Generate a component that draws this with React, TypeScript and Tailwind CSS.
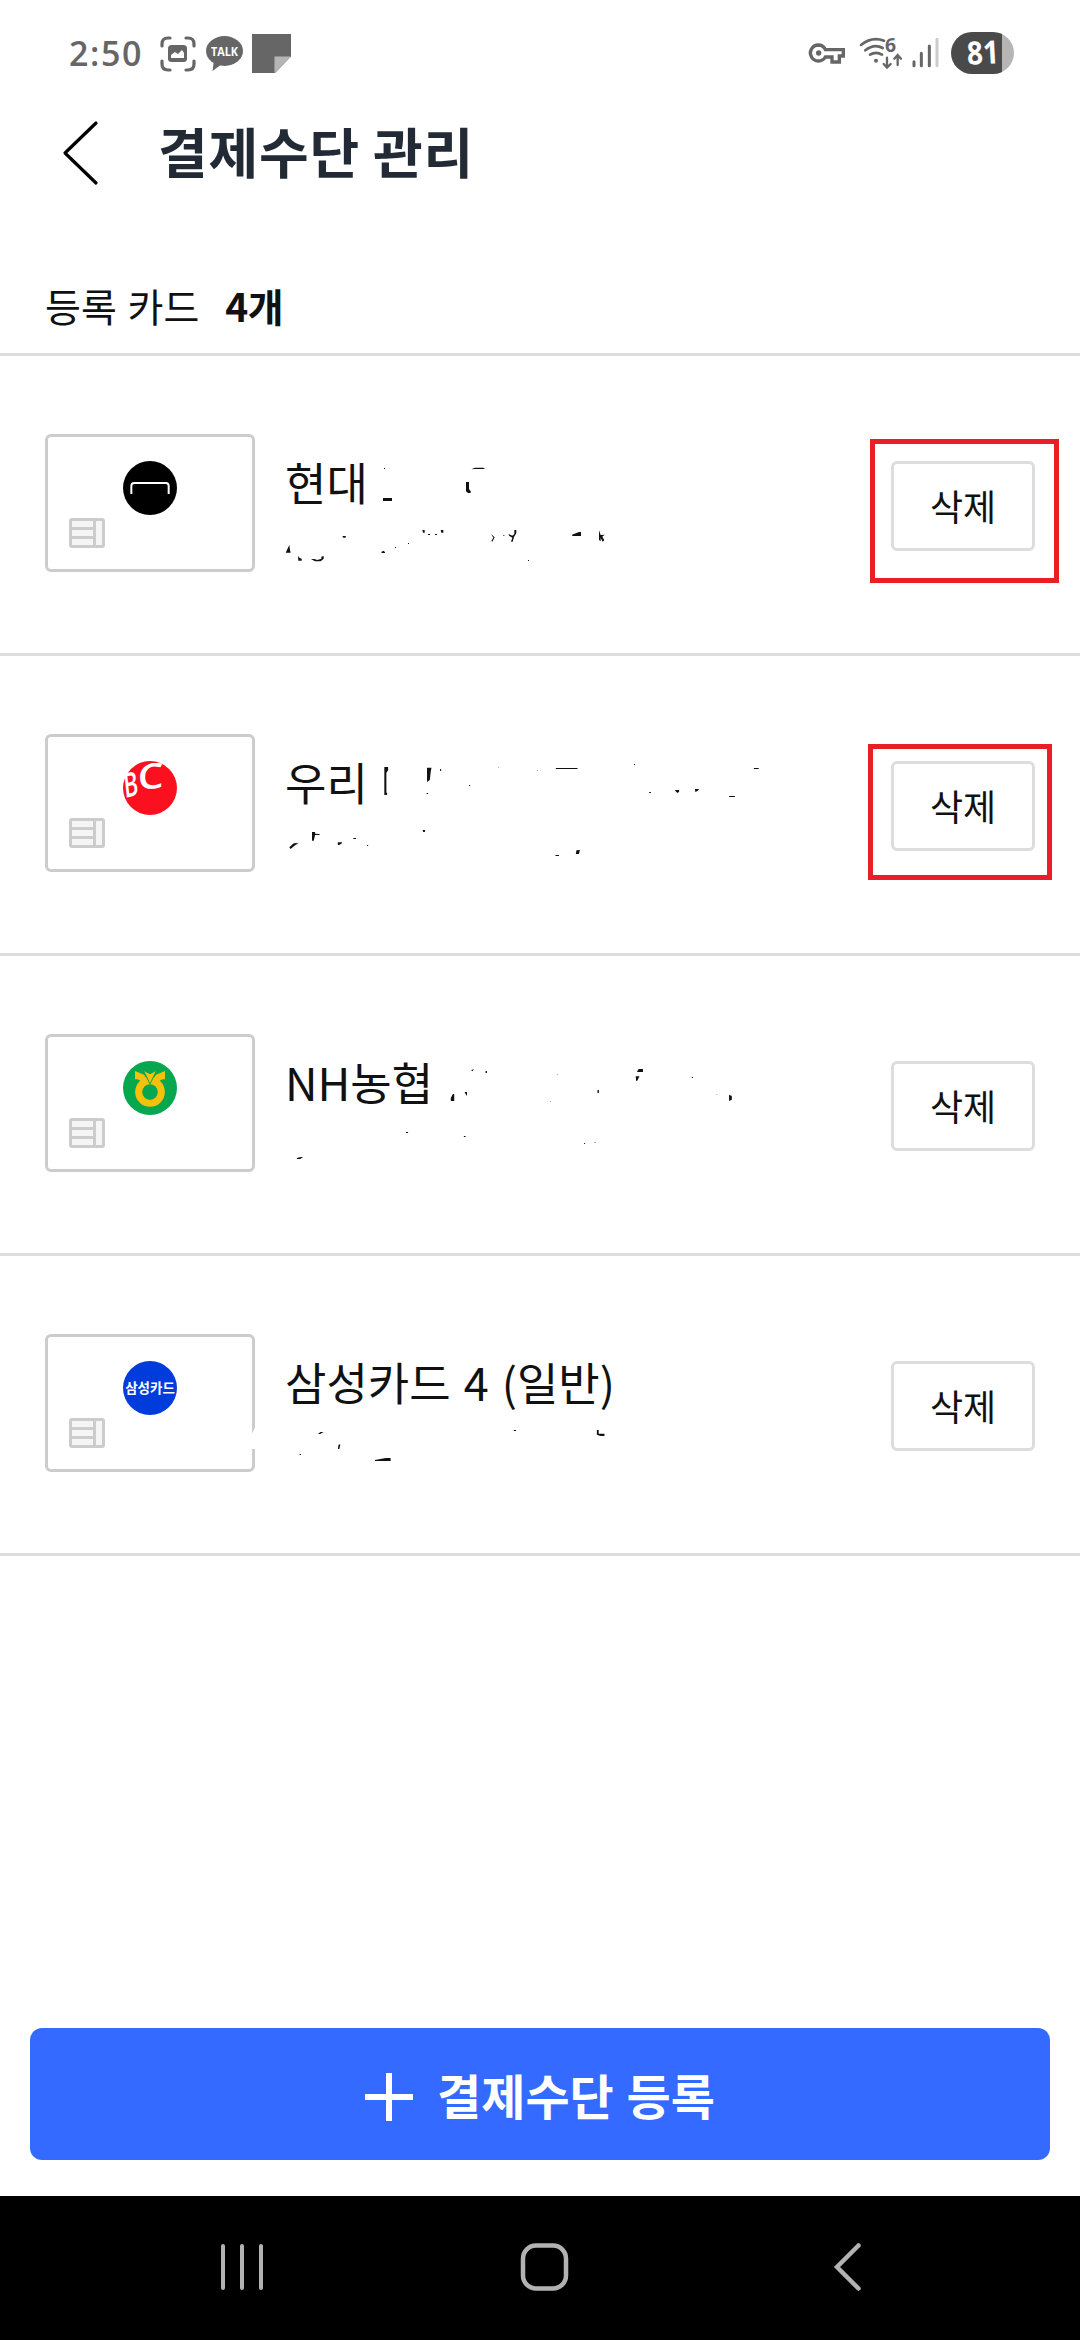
import React from 'react';

const INK = '#111111';

interface CardItem {
  id: string;
  name: string;
  logo: React.ReactNode;
  marks: React.ReactNode;
  highlight?: string;
}

const HyundaiLogo = () => (
  <svg viewBox="369 603 162 162" className="w-[54px] h-[54px]">
    <circle cx="450" cy="684" r="81" fill="#000" />
    <path d="M394 702V678Q394 669 403 669H498Q506 669 506 678V702" fill="none" stroke="#fff" strokeWidth="6" />
  </svg>
);

const BcLogo = () => (
  <svg viewBox="369 123 162 162" className="w-[54px] h-[54px] overflow-visible">
    <circle cx="450" cy="204" r="81" fill="#fb1020" />
    <g fill="#fff" className="font-['Open_Sans',sans-serif] font-semibold">
      <text transform="translate(375 234) rotate(-14) skewX(-8) scale(0.66 1)" fontSize="100">B</text>
      <text transform="translate(413 210) rotate(-6) skewX(-6) scale(1.18 1)" fontSize="104">C</text>
    </g>
  </svg>
);

const NonghyupLogo = () => (
  <svg viewBox="369 123 162 162" className="w-[54px] h-[54px]">
    <circle cx="450" cy="204" r="81" fill="#07a750" />
    <circle cx="450" cy="216" r="33.5" fill="none" stroke="#f6c00b" strokeWidth="22" />
    <path d="M405 153L432 164L450 190L468 164L495 153V178Q484 176 479 182L490 196H410L421 182Q416 176 405 178Z" fill="#f6c00b" />
    <circle cx="450" cy="216" r="23" fill="#07a750" />
    <path d="M430 151L450 161L470 151L450 192Z" fill="#f6c00b" stroke="#07a750" strokeWidth="3" />
  </svg>
);

const SamsungLogo = () => (
  <div className="w-[54px] h-[54px] rounded-full bg-[#003bdc] flex items-center justify-center text-white text-[13.5px] leading-none font-bold whitespace-nowrap">
    삼성카드
  </div>
);

const Chip = () => (
  <svg viewBox="0 0 36 30" className="absolute left-[21px] top-[81px] w-9 h-[30px]">
    <rect x="1.5" y="1.5" width="33" height="27" rx="1.5" fill="#f5f5f5" stroke="#ccc" strokeWidth="3" />
    <path d="M25.5 1V29M2 10.5H25M2 19.5H25" stroke="#ccc" strokeWidth="3" />
  </svg>
);

// Leftover specks of the erased card details
const HyundaiMarks = () => (
  <svg viewBox="0 0 1200 450" preserveAspectRatio="none" className="absolute left-[260px] top-[74px] w-[400px] h-[150px]" fill={INK}>
    <path d="M369 204H396V213H369ZM372 114H375V117H372ZM618 156H627L627 177L632 184V189H624L618 184ZM634 118L645 113H670L675 117H645Z" />
    <path d="M77 368L88 345L90 360L92 368ZM114 378L119 384L125 386V392H115ZM153 387H163L172 390L184 386V380L191 378V386L182 394H165ZM247 318H258L256 323H250ZM364 366L370 362L375 366V369H365ZM405 351H408V354H405ZM444 339H447V342H444Z" />
    <path d="M487 300H494V308H489ZM504 312H510V315H504ZM525 312H531V315H525ZM542 300H550V308H544ZM693 312L704 322L697 335L694 333L700 323ZM730 315H733V318H730ZM746 312L757 317L763 312V300H769V310L762 321L758 335H753L757 323L747 317ZM804 390H807V393H804ZM936 314L957 306H963V318H937ZM1017 301L1022 315L1034 314L1027 320L1033 331L1028 335L1022 324V334L1017 330Z" />
  </svg>
);

const WooriMarks = () => (
  <svg viewBox="0 0 1568 390" preserveAspectRatio="none" className="absolute left-[260px] top-[84px] w-[540px] h-[130px]" fill={INK}>
    <path d="M361 81H372V91L367 98V158H369V165H361ZM485 83H498L496 94L493 120L485 126ZM484 159H488V162H484ZM523 87H526V93H523ZM607 135H610V138H607ZM859 84H922V87H859ZM1086 72H1089V75H1086ZM1130 156H1135V159H1130ZM1205 150H1217V155L1212 159L1208 155ZM1263 147H1275L1270 153L1264 156ZM1362 168H1379V171H1362ZM1434 84H1448V87H1434Z" />
    <path d="M692 81H694V84H692ZM804 90H807V93H804Z" fill="#999" />
    <path d="M85 322L98 310L112 309L99 318L89 327ZM151 276H160V281L173 282V285H160L156 302H151ZM226 307H238V310L230 315H226ZM271 294H279V297H271ZM311 315H314V318H311ZM472 270H479V276H474ZM858 345H868V348H858ZM919 331L929 330L926 342H917Z" />
  </svg>
);

const NonghyupMarks = () => (
  <svg viewBox="0 0 1568 390" preserveAspectRatio="none" className="absolute left-[260px] top-[84px] w-[540px] h-[130px]" fill={INK}>
    <path d="M554 183V174L560 162H564V183ZM594 156H601V168L597 162ZM613 91L621 87L617 94ZM655 93H659V99H655ZM980 150H984V159H980ZM1095 94L1100 87H1112V96H1096ZM1091 109H1102L1095 123L1092 122ZM1254 111H1257V114H1254ZM1362 164L1370 168V179L1362 183Z" />
    <path d="M424 276H430V279H424ZM592 288H597V291H592ZM941 309H944V312H941ZM107 354L119 351H125L117 357H107Z" />
    <path d="M862 102H865V105H862ZM842 183H845V186H842ZM970 306H976V309H970ZM1325 162H1328V165H1325Z" fill="#aaa" />
  </svg>
);

const SamsungMarks = () => (
  <svg viewBox="0 0 1568 720" preserveAspectRatio="none" className="absolute left-0 top-[64px] w-[700px] h-[240px] overflow-hidden" fill={INK}>
    <path d="M560 340L566 338L570 325H576V387H560Z" fill="#fff" />
    <path d="M712 342L718 336H725L717 342ZM757 387L758 376L762 372V376L760 387ZM671 402H674V405H671ZM840 420L864 414H875V423H840ZM1151 330H1156V333H1151ZM1337 330H1341V341H1354V348H1345L1337 344Z" />
  </svg>
);

const CARDS: CardItem[] = [
  { id: 'hyundai', name: '현대', logo: <HyundaiLogo />, marks: <HyundaiMarks />, highlight: '-left-[21px] -top-[22px] w-[189px] h-[144px]' },
  { id: 'woori', name: '우리', logo: <BcLogo />, marks: <WooriMarks />, highlight: '-left-[23px] -top-[17px] w-[184px] h-[136px]' },
  { id: 'nh', name: 'NH농협', logo: <NonghyupLogo />, marks: <NonghyupMarks /> },
  { id: 'samsung', name: '삼성카드 4 (일반)', logo: <SamsungLogo />, marks: <SamsungMarks /> },
];

const StatusBar = () => (
  <div className="h-[106px] shrink-0 flex items-start justify-between pl-[69px] pr-[60px] pt-[20px] text-[#666]">
    <div className="flex items-start">
      <span className="w-[91px] pt-[13px] text-[34px] leading-[40px] tracking-[1.6px] font-['Open_Sans',sans-serif] font-semibold">2:50</span>
      <svg viewBox="160 20 132 70" className="w-[132px] h-[70px]">
        <path d="M162 46V44Q162 38 168 38H170M186 38H188Q194 38 194 44V46M194 61V64Q194 70 188 70H186M170 70H168Q162 70 162 64V61" fill="none" stroke="#666" strokeWidth="3.2" strokeLinecap="round" />
        <rect x="168" y="45" width="19" height="17" rx="3.5" fill="#666" />
        <path d="M171 58V55L175 52L178 54L182 50L184 53V58Z" fill="#fff" />
        <ellipse cx="224.500" cy="51" rx="18.500" ry="15" fill="#666" />
        <path d="M214 60L212.500 71L222 64Z" fill="#666" />
        <text x="224.500" y="56" textAnchor="middle" textLength="27" lengthAdjust="spacingAndGlyphs" fontSize="13" fill="#fff" className="font-['Open_Sans',sans-serif] font-bold">TALK</text>
        <path d="M252 34H291V56.500L275 73H252Z" fill="#666" />
        <path d="M274.500 56.500H291L274.500 73Z" fill="#b5b5b5" />
      </svg>
    </div>
    <svg viewBox="0 0 900 210" className="w-[300px] h-[70px] -mr-[60px]">
      <path d="M115 75A24 24 0 1 0 136 111H156V126H178V108H190V89H136Q130 75 115 75Z" fill="none" stroke="#666" strokeWidth="10" />
      <circle cx="116" cy="99" r="8" fill="#666" />
      <g fill="none" stroke="#666" strokeWidth="8" strokeLinecap="round">
        <path d="M243 75Q275 48 312 62M256 91Q282 70 308 84M270 104Q288 93 306 104" />
        <path d="M321 113V142M311 132L321 143L332 132M353 135V106M343 116L353 105L363 116" strokeWidth="7" />
        <path d="M402 125V137M424 100V137M448 78V137" strokeWidth="9" />
        <path d="M471 58V137" stroke="#ccc" strokeWidth="9" />
      </g>
      <circle cx="288" cy="122" r="6" fill="#666" />
      <text x="315" y="95" fontSize="58" fill="#666" className="font-['Open_Sans',sans-serif] font-bold">6</text>
      <clipPath id="battery">
        <rect x="513" y="36" width="189" height="126" rx="63" />
      </clipPath>
      <g clipPath="url(#battery)">
        <rect x="513" y="36" width="153" height="126" fill="#4a4a4a" />
        <rect x="666" y="36" width="36" height="126" fill="#b5b5b5" />
      </g>
      <text x="609" y="132" textAnchor="middle" fontSize="96" textLength="96" lengthAdjust="spacingAndGlyphs" fill="#fff" transform="rotate(-3 609 100)" className="font-['Open_Sans',sans-serif] font-bold">81</text>
    </svg>
  </div>
);

const CardRow: React.FC<{ card: CardItem }> = ({ card }) => (
  <li className="relative h-[300px] flex items-start border-b-3 border-[#ddd] px-[45px] pt-[78px]">
    <div className="relative w-[210px] h-[138px] shrink-0 border-3 border-[#ccc] rounded-[6px] flex justify-center pt-6">
      {card.logo}
      <Chip />
    </div>
    <p className="flex-1 pl-[30px] pt-[18px] text-[45px] leading-[60px] [word-spacing:3px] whitespace-nowrap">{card.name}</p>
    <div className="relative mt-[27px]">
      <button className="w-[144px] h-[90px] pb-[2px] border-3 border-[#ddd] rounded-[6px] text-[36px] leading-none">삭제</button>
      {card.highlight && <div className={`absolute border-5 border-[#e81f27] ${card.highlight}`} />}
    </div>
    {card.marks}
  </li>
);

const NavBar = () => (
  <nav className="h-[144px] shrink-0 bg-black flex items-center">
    <svg viewBox="0 2196 1080 144" className="w-[1080px] h-[144px]" fill="none" stroke="#b2b2b2">
      <path d="M223 2246V2288M242 2246V2288M261 2246V2288" strokeWidth="4" strokeLinecap="round" />
      <rect x="523" y="2245.500" width="43" height="43" rx="13" strokeWidth="4.500" />
      <path d="M858.500 2245.500L837 2267L858.500 2288.500" strokeWidth="4.500" strokeLinecap="round" />
    </svg>
  </nav>
);

export default function App() {
  return (
    <div className="w-[1080px] h-[2340px] flex flex-col bg-white text-[#111] overflow-hidden font-['Noto_Sans_CJK_KR',sans-serif]">
      <StatusBar />
      <header className="h-[154px] shrink-0 flex items-start pl-[60px]">
        <svg viewBox="60 116 40 74" className="w-10 h-[74px] mt-[10px]" fill="none" stroke="#000" strokeWidth="3.2" strokeLinecap="round" strokeLinejoin="round">
          <path d="M96 123L65 153L96 183" />
        </svg>
        <h1 className="ml-[58px] mt-[9px] text-[54px] leading-[72px] tracking-[0.8px] font-bold text-[#222b35] whitespace-nowrap">결제수단 관리</h1>
      </header>
      <div className="h-[96px] shrink-0 flex items-start gap-[26px] px-[45px] pt-[16px] text-[39px] leading-[58px] [word-spacing:2px] border-b-3 border-[#ddd]">
        <span>등록 카드</span>
        <strong className="font-bold tracking-[-0.5px]">4개</strong>
      </div>
      <ul className="flex-1">
        {CARDS.map((card) => (
          <CardRow key={card.id} card={card} />
        ))}
      </ul>
      <div className="px-[30px] pb-9">
        <button className="w-full h-[132px] rounded-[12px] bg-[#346aff] text-white flex items-center justify-center gap-6">
          <svg viewBox="0 0 48 48" className="w-12 h-12 mt-[6px]" stroke="#fff" strokeWidth="6">
            <path d="M24 0V48M0 24H48" />
          </svg>
          <span className="text-[48px] leading-[60px] [word-spacing:2px] font-bold">결제수단 등록</span>
        </button>
      </div>
      <NavBar />
    </div>
  );
}
